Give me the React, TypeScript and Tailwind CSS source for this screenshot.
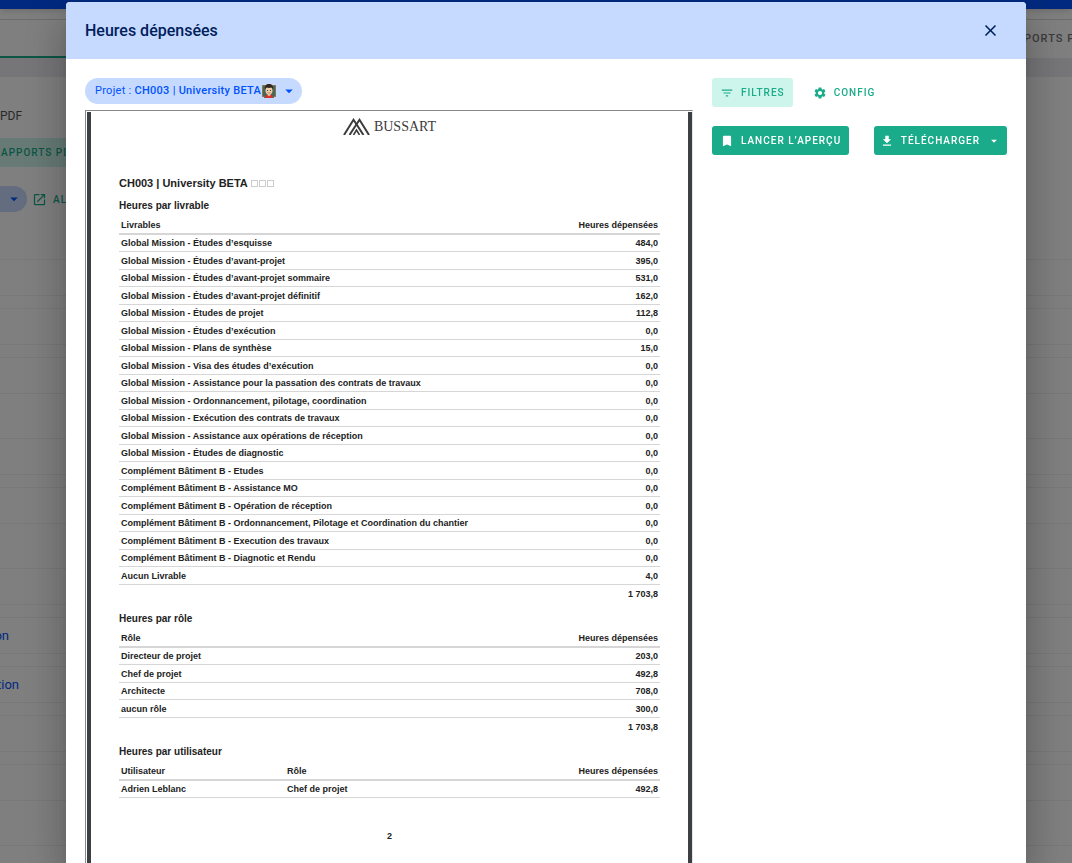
import React from 'react';
import {
  MdArrowDropDown,
  MdBookmark,
  MdClose,
  MdDownload,
  MdFilterList,
  MdOpenInNew,
  MdSettings,
} from 'react-icons/md';

const deliverables = [
  ['Global Mission - Études d’esquisse', '484,0'],
  ['Global Mission - Études d’avant-projet', '395,0'],
  ['Global Mission - Études d’avant-projet sommaire', '531,0'],
  ['Global Mission - Études d’avant-projet définitif', '162,0'],
  ['Global Mission - Études de projet', '112,8'],
  ['Global Mission - Études d’exécution', '0,0'],
  ['Global Mission - Plans de synthèse', '15,0'],
  ['Global Mission - Visa des études d’exécution', '0,0'],
  ['Global Mission - Assistance pour la passation des contrats de travaux', '0,0'],
  ['Global Mission - Ordonnancement, pilotage, coordination', '0,0'],
  ['Global Mission - Exécution des contrats de travaux', '0,0'],
  ['Global Mission - Assistance aux opérations de réception', '0,0'],
  ['Global Mission - Études de diagnostic', '0,0'],
  ['Complément Bâtiment B - Etudes', '0,0'],
  ['Complément Bâtiment B - Assistance MO', '0,0'],
  ['Complément Bâtiment B - Opération de réception', '0,0'],
  ['Complément Bâtiment B - Ordonnancement, Pilotage et Coordination du chantier', '0,0'],
  ['Complément Bâtiment B - Execution des travaux', '0,0'],
  ['Complément Bâtiment B - Diagnotic et Rendu', '0,0'],
  ['Aucun Livrable', '4,0'],
];

const roles = [
  ['Directeur de projet', '203,0'],
  ['Chef de projet', '492,8'],
  ['Architecte', '708,0'],
  ['aucun rôle', '300,0'],
];

const users = [['Adrien Leblanc', 'Chef de projet', '492,8']];

type ReportTableProps = {
  title: string;
  head: string[];
  rows: string[][];
  total?: string;
};

const ReportTable: React.FC<ReportTableProps> = ({ title, head, rows, total }) => {
  const last = head.length - 1;
  return (
    <section className="mb-[10px]">
      <h3 className="text-[10px] leading-[14px] font-bold">{title}</h3>
      <table className="mt-1 w-full table-fixed border-separate border-spacing-0 text-[9px] leading-[12px] font-bold">
        <thead>
          <tr>
            {head.map((label, i) => (
              <th
                key={label}
                className={
                  i === last
                    ? 'h-[18px] w-[100px] border-b-2 border-[#d6d6d6] px-[2px] text-right'
                    : i === 0 && head.length === 3
                      ? 'h-[18px] w-[166px] border-b-2 border-[#d6d6d6] px-[2px] text-left'
                      : 'h-[18px] border-b-2 border-[#d6d6d6] px-[2px] text-left'
                }
              >
                {label}
              </th>
            ))}
          </tr>
        </thead>
        <tbody>
          {rows.map((row) => (
            <tr key={row[0]} className="odd:h-[17px] even:h-[18px]">
              {row.map((cell, i) => (
                <td
                  key={i}
                  className={
                    i === last
                      ? 'border-b border-[#d6d6d6] px-[2px] text-right'
                      : 'border-b border-[#d6d6d6] px-[2px]'
                  }
                >
                  {cell}
                </td>
              ))}
            </tr>
          ))}
        </tbody>
        {total && (
          <tfoot>
            <tr className="h-[17px]">
              <td colSpan={head.length} className="px-[2px] text-right">
                {total}
              </td>
            </tr>
          </tfoot>
        )}
      </table>
    </section>
  );
};

const TeacherIcon: React.FC = () => (
  <svg width="14" height="14" viewBox="0 0 28 28" aria-hidden="true">
    <rect x="0" y="2" width="28" height="24" rx="1" fill="#8f7350" />
    <rect x="2" y="4" width="24" height="20" fill="#44695a" />
    <path d="M4 28c0-5 4-7 10-7s10 2 10 7z" fill="#6d5a4a" />
    <path d="M8 22h12v6H8z" fill="#d9302c" />
    <path d="M11 20h6v2l-3 3-3-3z" fill="#e5bd98" />
    <ellipse cx="14" cy="13" rx="7" ry="8" fill="#efcba6" />
    <path d="M6 11C5 4 8 0 14 0s9 4 8 11c-1-1-1-3-3-4-3 1-7 1-10 0-2 1-2 3-3 4z" fill="#33251f" />
    <circle cx="11" cy="13" r="1.200" fill="#333" />
    <circle cx="17" cy="13" r="1.200" fill="#333" />
    <path d="M11 17c2 1.500 4 1.500 6 0" stroke="#8a4a3a" strokeWidth="1.200" fill="none" />
  </svg>
);

const Logo: React.FC = () => (
  <div className="flex h-[17px] items-center justify-center gap-1 text-[#3c3c3c]">
    <svg width="27" height="17" viewBox="0 0 27 17" fill="none" stroke="currentColor" strokeWidth="2" aria-hidden="true">
      <path d="M1 17 10.500 1.800 20.500 17" />
      <path d="M6.500 17 16.500 1.800 26 17" />
      <path d="M10.500 17 13.500 12 16.500 17" strokeWidth="1.600" />
    </svg>
    <span className="font-['Liberation_Serif','Times_New_Roman',serif] text-[14px] leading-[17px]">BUSSART</span>
  </div>
);

const ReportPage: React.FC = () => (
  <div className="flex-1 bg-white px-7 pt-[6px] font-['Liberation_Sans',Arial,sans-serif] text-[#222]">
    <Logo />
    <h2 className="mt-[41px] flex items-center text-[11px] leading-[14px] font-bold">
      CH003 | University BETA
      <span className="ml-[3px] flex gap-px">
        <i className="size-[7px] border border-[#ccc]" />
        <i className="size-[7px] border border-[#ccc]" />
        <i className="size-[7px] border border-[#ccc]" />
      </span>
    </h2>
    <div className="mt-[9px]">
      <ReportTable title="Heures par livrable" head={['Livrables', 'Heures dépensées']} rows={deliverables} total="1 703,8" />
      <ReportTable title="Heures par rôle" head={['Rôle', 'Heures dépensées']} rows={roles} total="1 703,8" />
      <ReportTable title="Heures par utilisateur" head={['Utilisateur', 'Rôle', 'Heures dépensées']} rows={users} />
    </div>
    <p className="mt-8 text-center text-[9px] leading-[12px] font-bold">2</p>
  </div>
);

const Line: React.FC<{ children?: React.ReactNode }> = ({ children }) => (
  <div className="mb-3 flex h-[37px] items-center border-y border-[#f0f0f0] text-[13px] whitespace-nowrap text-[#0052ff]">
    {children}
  </div>
);

// Page under the dialog, only its margins stay visible
const Background: React.FC = () => (
  <div className="bg-white">
    <div className="relative h-[9px] bg-[#0052ff] shadow-md" />
    <div className="h-[10px]" />
    <div className="flex h-[39px] items-end justify-between border-t border-[#d8d8d8]">
      <div className="h-[2px] w-40 bg-[#1aab8a]" />
      <div className="flex h-full w-12 items-center overflow-hidden text-[11px] font-medium tracking-[1px] whitespace-nowrap text-[#777]">
        PORTS PDF
      </div>
    </div>
    <div className="h-[19px] bg-[#ededf3]" />
    <div className="mt-[31px] text-[12px] leading-[16px] text-[#555]">PDF</div>
    <div className="mt-[14px] flex h-[29px] w-40 items-center bg-[#cef5ec] pl-px">
      <span className="text-[10px] font-medium tracking-widest text-[#1aab8a]">APPORTS PDF</span>
    </div>
    <div className="mt-[19px] flex h-[26px] items-center">
      <div className="flex h-[26px] w-[27px] items-center justify-end rounded-r-full bg-[#c6daff] pr-1">
        <MdArrowDropDown size={18} className="text-[#0052ff]" />
      </div>
      <MdOpenInNew size={15} className="mr-[6px] ml-[5px] text-[#1aab8a]" />
      <span className="pt-px text-[10px] font-medium tracking-widest text-[#1aab8a]">ALLER</span>
    </div>
    <div className="mt-[47px]">
      <Line />
      <Line />
      <Line />
    </div>
    <div className="mt-11">
      <Line />
      <Line />
    </div>
    <div className="mt-11">
      <Line />
      <Line>
        <a href="#" className="flex w-[9px] justify-end">on</a>
      </Line>
      <Line>
        <a href="#" className="flex w-[19px] justify-end">tion</a>
      </Line>
      <Line />
      <Line />
    </div>
    <div className="mt-11 border-t border-[#f0f0f0]" />
  </div>
);

const App: React.FC = () => {
  return (
    <div className="relative h-screen overflow-hidden font-[Roboto,sans-serif]">
      <Background />
      <div className="fixed inset-0 flex bg-black/50 pt-[2px] pr-[46px] pl-[66px]">
        <div
          role="dialog"
          aria-labelledby="dialog-title"
          className="flex min-w-0 flex-1 flex-col rounded-t bg-white shadow-[0_11px_15px_-7px_rgba(0,0,0,0.2),0_24px_38px_3px_rgba(0,0,0,0.14),0_9px_46px_8px_rgba(0,0,0,0.12)]"
        >
          <header className="flex h-[57px] shrink-0 items-center justify-between rounded-t bg-[#c6daff] pr-[26px] pl-[19px] text-[#00205c]">
            <h1 id="dialog-title" className="text-[16px] leading-6 font-medium">
              Heures dépensées
            </h1>
            <button type="button" aria-label="Fermer">
              <MdClose size={19} />
            </button>
          </header>
          <div className="flex min-h-0 flex-1 gap-[19px] px-[19px] pt-[19px]">
            <main className="flex min-w-0 flex-1 flex-col">
              <button
                type="button"
                className="flex h-[26px] shrink-0 items-center self-start rounded-full bg-[#c6daff] pr-1 pl-[10px] text-[11px] leading-4 tracking-wide whitespace-nowrap text-[#0052ff]"
              >
                <span className="mr-px">
                  Projet : <span className="font-medium">CH003 | University BETA</span>
                </span>
                <TeacherIcon />
                <MdArrowDropDown size={18} className="ml-1" />
              </button>
              <div className="mt-[6px] flex min-h-0 flex-1 overflow-hidden border-t border-r border-l border-t-[#888] border-r-[#e4e4e4] border-l-[#888] pt-px pl-px">
                <div className="flex flex-1 border-x-4 border-[#3c4043]">
                  <ReportPage />
                </div>
              </div>
            </main>
            <aside className="w-[295px] shrink-0 text-[10px] font-medium tracking-widest">
              <div className="flex gap-3">
                <button type="button" className="flex h-[29px] items-center gap-[7px] rounded-[3px] bg-[#cef5ec] px-2 text-[#1aab8a]">
                  <MdFilterList size={14} />
                  FILTRES
                </button>
                <button type="button" className="flex h-[29px] items-center gap-[7px] px-2 text-[#1aab8a]">
                  <MdSettings size={14} />
                  CONFIG
                </button>
              </div>
              <div className="mt-[19px] flex justify-between">
                <button type="button" className="flex h-[29px] items-center gap-[7px] rounded-[3px] bg-[#1aab8a] px-2 text-white">
                  <MdBookmark size={14} />
                  LANCER L’APERÇU
                </button>
                <button type="button" className="flex h-[29px] items-center gap-[7px] rounded-[3px] bg-[#1aab8a] px-[6px] text-white">
                  <MdDownload size={14} />
                  TÉLÉCHARGER
                  <MdArrowDropDown size={14} />
                </button>
              </div>
            </aside>
          </div>
        </div>
      </div>
    </div>
  );
};

export default App;
